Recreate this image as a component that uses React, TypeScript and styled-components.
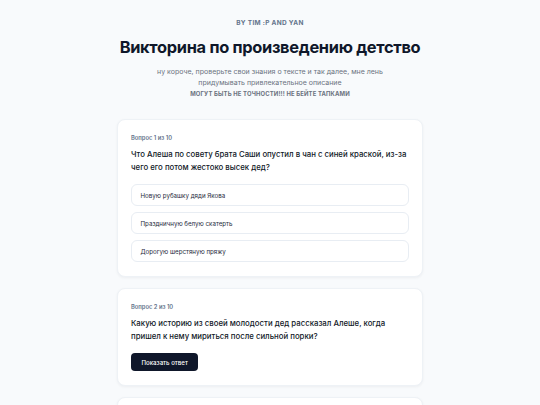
import React from "react";
import styled, { createGlobalStyle } from "styled-components";

const Global = createGlobalStyle`
  html, body { margin: 0; padding: 0; background: #f8fafc; }
  body { font-family: Inter, "Noto Sans", sans-serif; color: #0f172a; -webkit-font-smoothing: antialiased; }
  * { box-sizing: border-box; }
`;

const Page = styled.div`
  display: flex;
  flex-direction: column;
  align-items: center;
  padding: 19px 0 40px;
`;

const Header = styled.header`
  display: flex;
  flex-direction: column;
  align-items: center;
  text-align: center;
  margin-bottom: 21px;
`;

const Byline = styled.div`
  font-size: 6.5px;
  line-height: 8px;
  font-weight: 700;
  letter-spacing: 0.3px;
  color: #64748b;
  text-transform: uppercase;
`;

const Title = styled.h1`
  margin: 10px 0 0;
  font-size: 16.4px;
  line-height: 20px;
  font-weight: 700;
  letter-spacing: -0.3px;
  color: #0f172a;
`;

const Description = styled.p`
  margin: 10px 0 0;
  width: 232px;
  font-size: 7px;
  line-height: 10.5px;
  color: #6b7280;
`;

const Warning = styled.div`
  margin-top: 2px;
  font-size: 5.9px;
  line-height: 8px;
  font-weight: 700;
  color: #6b7280;
  letter-spacing: 0.15px;
  text-transform: uppercase;
`;

const List = styled.div`
  display: flex;
  flex-direction: column;
  gap: 11px;
  width: 306px;
`;

const Card = styled.section`
  display: flex;
  flex-direction: column;
  background: #ffffff;
  border: 1px solid #eef2f6;
  border-radius: 8px;
  box-shadow: 0 1px 3px rgba(15, 23, 42, 0.05);
  padding: 14px 13px 14px;
`;

const Counter = styled.div`
  font-size: 5.8px;
  line-height: 7px;
  font-weight: 600;
  color: #64748b;
`;

const Question = styled.div`
  margin-top: 6.5px;
  font-size: 7.8px;
  line-height: 13.5px;
  font-weight: 500;
  color: #111827;
`;

const Options = styled.div`
  display: flex;
  flex-direction: column;
  gap: 6px;
  margin-top: 9.5px;
`;

const Option = styled.button`
  all: unset;
  box-sizing: border-box;
  display: flex;
  align-items: center;
  height: 22px;
  padding: 0 8.5px;
  border: 1px solid #e8edf3;
  border-radius: 6px;
  background: #ffffff;
  font-family: Inter, sans-serif;
  font-size: 6.2px;
  color: #1e293b;
`;

const AnswerButton = styled.button`
  all: unset;
  box-sizing: border-box;
  margin-top: 9.5px;
  align-self: flex-start;
  display: inline-flex;
  align-items: center;
  justify-content: center;
  height: 18px;
  padding: 0 10.5px;
  border-radius: 4px;
  background: #0f172a;
  color: #ffffff;
  font-family: Inter, sans-serif;
  font-size: 6.1px;
  font-weight: 500;
`;

const questions = [
  {
    q: "Что Алеша по совету брата Саши опустил в чан с синей краской, из-за чего его потом жестоко высек дед?",
    options: ["Новую рубашку дяди Якова", "Праздничную белую скатерть", "Дорогую шерстяную пряжу"],
  },
  {
    q: "Какую историю из своей молодости дед рассказал Алеше, когда пришел к нему мириться после сильной порки?",
    options: null,
  },
  {
    q: "Кто такой Цыганок?",
    options: null,
  },
];

export default function App() {
  return (
    <>
      <Global />
      <Page>
        <Header>
          <Byline>By Tim :P and Yan</Byline>
          <Title>Викторина по произведению детство</Title>
          <Description>
            ну короче, проверьте свои знания о тексте и так далее, мне лень придумывать привлекательное описание
          </Description>
          <Warning>могут быть не точности!!! не бейте тапками</Warning>
        </Header>
        <List>
          {questions.map((item, i) => (
            <Card key={i}>
              <Counter>Вопрос {i + 1} из 10</Counter>
              <Question>{item.q}</Question>
              {item.options ? (
                <Options>
                  {item.options.map((o) => (
                    <Option key={o}>{o}</Option>
                  ))}
                </Options>
              ) : (
                <AnswerButton>Показать ответ</AnswerButton>
              )}
            </Card>
          ))}
        </List>
      </Page>
    </>
  );
}
